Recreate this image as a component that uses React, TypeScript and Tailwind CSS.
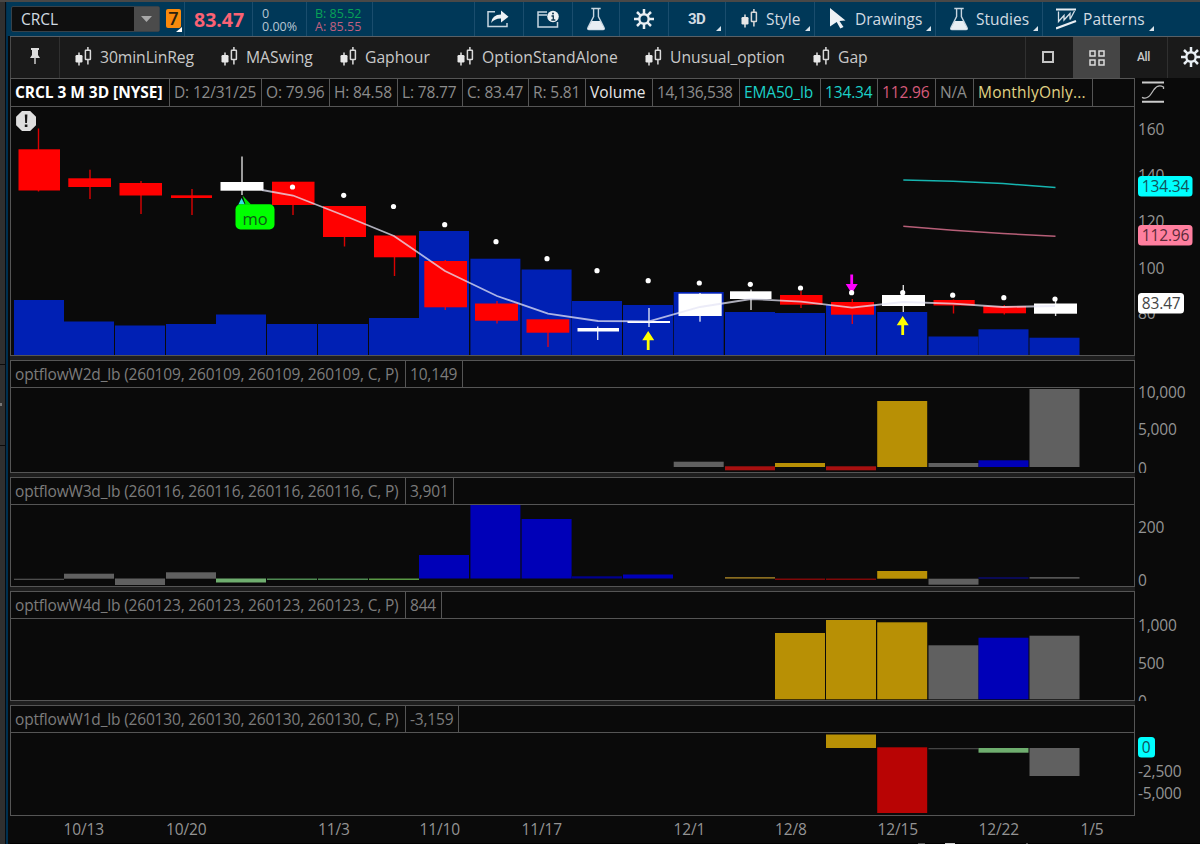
import type { ReactNode } from "react";

const GOLD = "#b89005";
const GRAY = "#606060";
const BLUE = "#0000b8";
const RED = "#b80404";
const GREEN = "#6fae6f";

const SLOTS = [14, 64, 115, 166, 216, 267, 318, 369, 419, 470.4, 521.6, 572, 623, 673.7, 725, 775, 826, 877.2, 928.5, 978.5, 1029.5];
const VOLUME_TOPS = [300, 321.5, 325.5, 324, 314.5, 324, 324, 318, 231, 258.7, 269.5, 301, 305, 292, 312, 313, 305, 312, 336.5, 329.3, 337.7];

// center, left, right, high, body top, body bottom, low, rising
type Candle = [number, number, number, number, number, number, number, boolean];
const CANDLES: Candle[] = [
  [38.5, 18.5, 60, 128.5, 149.3, 190.5, 191.5, false],
  [90, 68.3, 111, 169.7, 178.3, 187, 199, false],
  [141, 119.5, 162, 181, 183, 195.5, 214, false],
  [192, 171, 212, 189, 195.3, 198, 215, false],
  [242, 220.5, 263.5, 156.5, 182, 190.7, 195, true],
  [293, 272, 314.5, 181.7, 181.7, 205, 215, false],
  [344.5, 323, 366, 206, 206, 237, 246.5, false],
  [394.5, 374, 416, 235.5, 235.5, 257.3, 276, false],
  [445.3, 424.3, 467, 260, 261, 307.3, 310, false],
  [497, 475, 518, 301, 303.5, 320.7, 323.5, false],
  [548, 526.5, 569.3, 319, 319.3, 332.7, 347, false],
  [597.7, 577.5, 619, 326.5, 328, 331.5, 340, true],
  [649, 627.5, 670, 308, 321, 323, 327, true],
  [700, 678.5, 721.7, 293, 293.7, 316, 321.7, true],
  [751, 730, 771.5, 289.5, 291.3, 299, 310, true],
  [801, 780, 822.5, 291, 295, 304.7, 308, false],
  [852.3, 831, 874, 299, 302, 314.7, 324, false],
  [903.3, 882, 925, 285, 295, 306, 312, true],
  [953.5, 933.5, 974.7, 299.5, 300, 305.5, 313.5, false],
  [1004.3, 983.3, 1026, 305, 306, 313.3, 314.5, false],
  [1055.6, 1034, 1077, 299, 303.5, 313.7, 316, true],
];
const DOTS = [[292.5, 187], [343.7, 195.3], [393.5, 206.5], [444.7, 224.7], [496, 241.7], [547, 258.7], [597, 270.7], [648.2, 280.7], [699.3, 283], [750.3, 284.3], [800.5, 288], [851.6, 292.7], [902.7, 292.7], [952.7, 295.2], [1003.8, 297.7], [1055, 299]];

type Bar = [slot: number, top: number, bottom: number, color: string];

function Bars({ data }: { data: Bar[] }) {
  return (
    <>
      {data.map(([s, t, b, c], i) => (
        <rect key={i} x={SLOTS[s]} y={t} width={50} height={b - t} fill={c} />
      ))}
    </>
  );
}

function CandleIcon({ className = "" }: { className?: string }) {
  return (
    <svg width="17" height="20" viewBox="0 0 17 20" className={`shrink-0 ${className}`}>
      <path d="M4 5.500v13" stroke="#e0e0e0" strokeWidth="1.500" />
      <rect x="0.500" y="8" width="7" height="7.500" rx="1.200" fill="#e8e8e8" />
      <path d="M12.900 0v3.500M12.900 12.500v5" stroke="#d0d0d0" strokeWidth="1.600" />
      <rect x="10.400" y="3.200" width="5" height="9.300" rx="0.500" fill="none" stroke="#d8d8d8" strokeWidth="1.500" />
    </svg>
  );
}

function Flask() {
  return (
    <svg width="20" height="24" viewBox="0 0 20 24" className="shrink-0">
      <path d="M5.300 1.500h9.400M7.600 2v7.500L2 20.500q-1 2 1 2h14q2 0 1-2L12.400 9.500V2" fill="none" stroke="#c6d5e0" strokeWidth="1.400" />
      <path d="M5.800 14h8.400l3.800 7q.6 1.500-1 1.500H3q-1.600 0-1-1.500z" fill="#e8eef3" />
    </svg>
  );
}

function Gear() {
  return (
    <svg width="20" height="20" viewBox="0 0 20 20" className="shrink-0">
      <circle cx="10" cy="10" r="4.700" fill="none" stroke="#e8eef3" strokeWidth="2.400" />
      <path d="M10 0v5M10 15v5M0 10h5M15 10h5M3 3l3.400 3.400M13.600 13.600L17 17M17 3l-3.400 3.400M6.400 13.600L3 17" stroke="#e8eef3" strokeWidth="2.500" />
    </svg>
  );
}

function Corner() {
  return (
    <svg width="5" height="5" viewBox="0 0 5 5" className="absolute right-[4px] bottom-[5px]">
      <path d="M5 0v5H0z" fill="#d8e2ea" />
    </svg>
  );
}

function TopCell({ className, children }: { className: string; children?: ReactNode }) {
  return <div className={`relative flex h-full shrink-0 items-center border-l border-[#1a4d6d] ${className}`}>{children}</div>;
}

function TopBar() {
  return (
    <div className="flex h-[34px] shrink-0 items-center bg-[#003858] text-[15.5px] text-[#d2dbe2]">
      <div className="ml-[4px] flex h-[26px] w-[149px] shrink-0 items-center rounded-[2px] border border-[#37424a] bg-[#0f0f0f] pl-[9px] text-[15.5px]">
        <span className="flex-1 pt-[2px]">CRCL</span>
        <div className="flex h-[24px] w-[25px] items-center justify-center bg-[#4b4b4b]">
          <svg width="11" height="6" viewBox="0 0 11 6"><path d="M0 0h11L5.500 6z" fill="#a8a8a8" /></svg>
        </div>
      </div>
      <div className="relative ml-[6px] flex h-full w-[18px] shrink-0 items-center">
        <div className="mb-[2px] flex h-[19px] w-[15px] items-center justify-center rounded-[2px] bg-[#f98a0c] text-[18px] font-semibold text-[#2b2110]">7</div>
        <svg width="6" height="5" viewBox="0 0 6 5" className="absolute right-[2px] bottom-[4px]"><path d="M6 0v5H0z" fill="#fff" /></svg>
      </div>
      <TopCell className="w-[68px] pt-[2px] pl-[9px] text-[19.5px] font-bold text-[#fb6274]">83.47</TopCell>
      <TopCell className="w-[54px] pt-[2px] pl-[9px] text-[12.5px] leading-[13px] text-[#b7c6d2]"><div>0<br />0.00%</div></TopCell>
      <TopCell className="w-[66px] pt-[2px] pl-[8px] text-[12.5px] leading-[13px]">
        <div><div className="text-[#08a257]">B: 85.52</div><div className="text-[#c0607f]">A: 85.55</div></div>
      </TopCell>
      <TopCell className="w-[102px]" />
      <TopCell className="w-[49px] justify-center">
        <svg width="22" height="18" viewBox="0 0 22 18" className="mr-[2px]">
          <path d="M8 1.800H1V16.500h19V13" fill="none" stroke="#c6d5e0" strokeWidth="1.500" />
          <path d="M4 13Q5 4.500 14 4.500V.5L21.500 6.800 14 12.500V8.500Q8 8.200 4 13z" fill="#eef2f5" />
        </svg>
      </TopCell>
      <TopCell className="w-[49px] justify-center">
        <svg width="23" height="19" viewBox="0 0 23 19">
          <path d="M10 2H1v15h19.500v-5M1 5h9" fill="none" stroke="#c6d5e0" strokeWidth="1.500" />
          <circle cx="16" cy="6.500" r="5.800" fill="#eef2f5" />
          <path d="M14.500 6h1.800v4M14.300 10h4" stroke="#12384f" strokeWidth="1.300" fill="none" />
          <circle cx="16" cy="3.500" r="1" fill="#12384f" />
        </svg>
      </TopCell>
      <TopCell className="w-[47px] justify-center"><Flask /></TopCell>
      <TopCell className="w-[49px] justify-center"><Gear /></TopCell>
      <TopCell className="w-[57px] pl-[19px] font-['Roboto',sans-serif] text-[15px] font-bold tracking-[-0.5px]">3D<Corner /></TopCell>
      <TopCell className="w-[89px] pl-[15px]"><CandleIcon /><span className="ml-[8px] pt-[2px]">Style</span><Corner /></TopCell>
      <TopCell className="w-[121px] pl-[15px]">
        <svg width="16" height="21" viewBox="0 0 16 21" className="mb-[2px]"><path d="M0 0L15.500 12.500 9.500 13l4 6-3.200 1.500-3.600-6.500L0 18.500z" fill="#eef2f5" /></svg>
        <span className="ml-[9px] pt-[2px]">Drawings</span><Corner />
      </TopCell>
      <TopCell className="w-[107px] pl-[13px]"><Flask /><span className="ml-[7px] pt-[2px]">Studies</span><Corner /></TopCell>
      <TopCell className="w-[116px] pl-[13px]">
        <svg width="21" height="22" viewBox="0 0 21 22">
          <path d="M0 1.500h20M0 20.500L20 13" stroke="#e8eef3" strokeWidth="2.200" />
          <path d="M2.500 3.500v10L8 7.500V12l6-6.500v6L18.500 3" fill="none" stroke="#d6e0e8" strokeWidth="1.300" />
        </svg>
        <span className="ml-[6px] pt-[2px] tracking-[0.1px]">Patterns</span><Corner />
      </TopCell>
    </div>
  );
}

function Preset({ className, children }: { className: string; children: ReactNode }) {
  return <div className={`flex shrink-0 items-center gap-[8px] ${className}`}><CandleIcon /><span className="pt-[2px]">{children}</span></div>;
}

function PresetBar() {
  return (
    <div className="ml-[2px] flex h-[41px] shrink-0 items-center overflow-hidden border-l border-[#4a4a4a] bg-[#1a1a1a] pb-[1px] text-[15.7px] text-[#c9c9c9]">
      <div className="flex h-[41px] w-[49px] shrink-0 items-center justify-center border-r border-[#303030]">
        <svg width="10" height="18" viewBox="0 0 10 18" className="-mt-[2px]"><path d="M1 1h8v2H8v5l2 3H0l2-3V3H1z" fill="#ddd" /><path d="M5 10v7" stroke="#ccc" strokeWidth="1.500" /></svg>
      </div>
      <Preset className="w-[146px] pl-[15px] tracking-[-0.08px]">30minLinReg</Preset>
      <Preset className="w-[119px] pl-[15px]">MASwing</Preset>
      <Preset className="w-[117px] pl-[15px]">Gaphour</Preset>
      <Preset className="w-[188px] pl-[15px] tracking-[0.1px]">OptionStandAlone</Preset>
      <Preset className="w-[168px] pl-[15px]">Unusual_option</Preset>
      <Preset className="w-[227px] pl-[15px]">Gap</Preset>
      <div className="flex h-[41px] w-[48px] shrink-0 items-center justify-center border-l border-[#303030] pr-[3px] pb-[1px]"><div className="h-[12px] w-[12px] border-2 border-[#c4c4c4]" /></div>
      <div className="-mt-[1px] -mb-[2px] flex h-[41px] w-[47px] shrink-0 items-center justify-center bg-[#454545]">
        <svg width="16" height="16" viewBox="0 0 16 16" fill="none" stroke="#dcdcdc" strokeWidth="1.500">
          <path d="M1 1h5v5H1zM10 1h5v5h-5zM1 10h5v5H1zM10 10h5v5h-5z" />
        </svg>
      </div>
      <div className="flex h-[41px] w-[48px] shrink-0 items-center justify-center border-r border-[#303030] font-['Roboto',sans-serif] text-[12px] font-medium tracking-[-0.3px]">All</div>
      <div className="ml-[13px] shrink-0"><Gear /></div>
    </div>
  );
}

function Cell({ className, children }: { className: string; children?: ReactNode }) {
  return <div className={`flex h-full shrink-0 items-center overflow-hidden border-r border-[#555] pl-[4px] whitespace-nowrap ${className}`}>{children}</div>;
}

function Panel({ header, plotClass, viewBox, axisBox, axis, children, rowClass, headClass }: {
  header: ReactNode; plotClass: string; viewBox: string; axisBox: string; axis: ReactNode; children: ReactNode; rowClass: string; headClass: string;
}) {
  return (
    <div className={`flex shrink-0 ${rowClass}`}>
      <div className="flex w-[1125px] shrink-0 flex-col border border-[#555]">
        <div className={`flex shrink-0 border-b border-[#555] text-[#8c8c8c] ${headClass}`}>{header}</div>
        <svg viewBox={viewBox} className={`block w-[1123px] shrink-0 ${plotClass}`}>{children}</svg>
      </div>
      <svg viewBox={axisBox} className="h-full w-[65px] shrink-0 overflow-hidden" fontSize="15.500" letterSpacing="-0.150" fill="#949494">{axis}</svg>
    </div>
  );
}

function StudyHeader({ name, value, valueClass }: { name: string; value: string; valueClass: string }) {
  return (
    <>
      <Cell className="w-[395px] pt-[1px] text-[#7c7c7c]">{name}</Cell>
      <Cell className={`pt-[1px] text-[#7c7c7c] ${valueClass}`}>{value}</Cell>
    </>
  );
}

function AxisText({ y, children }: { y: number; children: string }) {
  return <text x="1138" y={Math.floor(y) + 6}>{children}</text>;
}

function Badge({ y, w, fill, color, children }: { y: number; w: number; fill: string; color: string; children: string }) {
  return (
    <g>
      <rect x="1138" y={y} width={w} height="20.500" rx="3.500" fill={fill} />
      <text x="1141.800" y={y + 16} fill={color}>{children}</text>
    </g>
  );
}

function Gap() {
  return <div className="h-[4px] w-[1125px] shrink-0 bg-[#1e1e1e]" />;
}

export default function App() {
  return (
    <div className="flex h-[844px] w-[1200px] flex-col overflow-hidden bg-[#0a0a0a] font-['Open_Sans','Noto_Sans',sans-serif]">
      <div className="h-[2px] shrink-0 bg-[#494847]" />
      <div className="flex min-h-0 flex-1">
        <div className="flex w-[5px] shrink-0 flex-col bg-[#303030]">
          <div className="mt-[362px] h-[82px] border-y border-[#0c0c0c] pt-[38px]"><div className="h-[3px] w-[2px] bg-[#777]" /></div>
        </div>
        <div className="w-[1px] shrink-0 bg-[#080c10]" />
        <div className="w-[2px] shrink-0 bg-[#003050]" />
        <div className="flex w-[1192px] shrink-0 flex-col">
          <div className="-ml-[1px] flex flex-col"><TopBar /></div>
          <div className="ml-[2px] h-[1px] shrink-0 bg-[#596066]" />
          <PresetBar />
          <div className="ml-[2px] flex flex-col">
            <Panel
              rowClass="h-[278px]" headClass="h-[28px] text-[15.5px] tracking-[-0.15px]" plotClass="h-[248px]" viewBox="11 107 1123 248" axisBox="1135 78 65 278"
              header={
                <>
                  <Cell className="w-[159px] pt-[1px] font-bold tracking-[-0.05px] text-white">CRCL 3 M 3D [NYSE]</Cell>
                  <Cell className="w-[92px] pt-[1px]">D: 12/31/25</Cell>
                  <Cell className="w-[68px] pt-[1px]">O: 79.96</Cell>
                  <Cell className="w-[68px] pt-[1px]">H: 84.58</Cell>
                  <Cell className="w-[65px] pt-[1px]">L: 78.77</Cell>
                  <Cell className="w-[66px] pt-[1px]">C: 83.47</Cell>
                  <Cell className="w-[57px] pt-[1px]">R: 5.81</Cell>
                  <Cell className="w-[67px] pt-[1px] tracking-[0.1px] text-[#e6e6e6]">Volume</Cell>
                  <Cell className="w-[87px] pt-[1px] tracking-[-0.35px]">14,136,538</Cell>
                  <Cell className="w-[81px] pt-[1px] text-[#1cd1c8]">EMA50_lb</Cell>
                  <Cell className="w-[57px] pt-[1px] text-[#1cd1c8]">134.34</Cell>
                  <Cell className="w-[58px] pt-[1px] text-[#d65b7b]">112.96</Cell>
                  <Cell className="w-[38px] pt-[1px]">N/A</Cell>
                  <Cell className="w-[119px] pt-[1px] tracking-[0.2px] text-[#e0d385]">MonthlyOnly...</Cell>
                </>
              }
              axis={
                <>
                  <path d="M1142 82.500h22M1142 101.700h22" stroke="#ccc" strokeWidth="2" />
                  <path d="M1142 97.300q5 2.500 9-3.300l3-4.500q4-5.500 9.500-2.500v2" fill="none" stroke="#bbb" strokeWidth="1.300" />
                  <AxisText y={129}>160</AxisText>
                  <AxisText y={175}>140</AxisText>
                  <AxisText y={221}>120</AxisText>
                  <AxisText y={268}>100</AxisText>
                  <AxisText y={313}>80</AxisText>
                  <Badge y={176} w={54.5} fill="#00ffff" color="#12525a">134.34</Badge>
                  <Badge y={225} w={54.5} fill="#ff7f9f" color="#5a2a38">112.96</Badge>
                  <Badge y={293} w={46} fill="#ffffff" color="#444">83.47</Badge>
                </>
              }
            >
              {SLOTS.map((x, i) => <rect key={i} x={x} y={VOLUME_TOPS[i]} width={50} height={355 - VOLUME_TOPS[i]} fill="#0020b4" />)}
              {CANDLES.map(([cx, l, r, hi, t, b, lo, up], i) => (
                <g key={i} fill={up ? "#fff" : "#f00"}>
                  <rect x={cx - 0.7} y={hi} width="1.400" height={lo - hi} fillOpacity={0.85} />
                  <rect x={l} y={t} width={r - l} height={b - t} />
                </g>
              ))}
              <polyline points="262,190 293,195.500 344,215.500 394,236 445,271 497,296 548,313.700 598,321 649,321.300 700,307 751,299 801,301.700 852,307.700 903,302 953,303.700 1003,307 1055,306" fill="none" stroke="#e6e6f6" strokeOpacity="0.750" strokeWidth="1.800" />
              <polyline points="903.300,180 953,181.300 1003,183.500 1055.500,187.500" fill="none" stroke="#16b5b0" strokeWidth="1.500" />
              <polyline points="903.300,226.300 953,230.300 1003,233.600 1055.500,236.200" fill="none" stroke="#b75f78" strokeWidth="1.500" />
              <path d="M648.200 331l6 9.200h-4.600V350h-2.800v-9.800h-4.600zM902.700 316l6 9.200h-4.600V335h-2.800v-9.800h-4.600z" fill="#ffff00" />
              <path d="M851.700 293.500l-6-9.500h4.600V274.500h2.800V284h4.600z" fill="#ff00ff" />
              {DOTS.map(([x, y], i) => <circle key={i} cx={x} cy={y} r="2.600" fill="#fff" />)}
              <path d="M241.600 198l3.200 6.500h-6.400z" fill="#35e0e0" />
              <path d="M242.500 195.500l8.500 9h-5.500z" fill="#00e000" />
              <rect x="235.500" y="204.200" width="39" height="25.300" rx="5" fill="#00ff00" />
              <text x="242.500" y="224.500" fontSize="16.500" fill="#0d5a16">mo</text>
              <path d="M22 111h8.200l5.800 5.800v8.400l-5.800 5.800H22l-5.900-5.800v-8.400z" fill="#dedede" />
              <path d="M24.800 114.500h2.600l-.4 8.500h-1.800zM24.800 124.500h2.600v2.500h-2.600z" fill="#151515" />
            </Panel>
            <Gap />
            <Panel rowClass="h-[113px]" headClass="h-[27px] text-[15.5px] tracking-[-0.18px]" plotClass="h-[84px]" viewBox="11 388 1123 84" axisBox="1135 360 65 113"
              header={<StudyHeader name="optflowW2d_lb (260109, 260109, 260109, 260109, C, P)" value="10,149" valueClass="w-[57px]" />}
              axis={<><AxisText y={392}>10,000</AxisText><AxisText y={429}>5,000</AxisText><AxisText y={468}>0</AxisText></>}>
              <Bars data={[[13, 461.7, 467, GRAY], [14, 466.3, 470.3, "#a81010"], [15, 463, 467, GOLD], [16, 466.3, 470.3, "#a81010"], [17, 401, 467, GOLD], [18, 463, 467, GRAY], [19, 460.3, 467, BLUE], [20, 389, 467, GRAY]]} />
            </Panel>
            <Gap />
            <Panel rowClass="h-[110px]" headClass="h-[27px] text-[15.5px] tracking-[-0.18px]" plotClass="h-[81px]" viewBox="11 505 1123 81" axisBox="1135 477 65 110"
              header={<StudyHeader name="optflowW3d_lb (260116, 260116, 260116, 260116, C, P)" value="3,901" valueClass="w-[48px]" />}
              axis={<><AxisText y={527}>200</AxisText><AxisText y={580}>0</AxisText></>}>
              <Bars data={[[0, 578.7, 579.9, "#555"], [1, 573.7, 578.7, GRAY], [2, 578.5, 585, GRAY], [3, 572.3, 578.7, GRAY], [4, 578.5, 582.5, GREEN], [5, 578.5, 580, "#4f8a52"], [6, 578.5, 580, "#4f8a52"], [7, 578.5, 580, "#5a9a45"], [8, 555, 578.5, BLUE], [9, 505, 578.5, BLUE], [10, 519, 578.5, BLUE], [11, 576.3, 578.5, "#000090"], [12, 574.5, 578.5, BLUE], [14, 577, 578.7, "#8a6d20"], [15, 578.5, 580, "#800808"], [16, 578.5, 580, "#800808"], [17, 571, 578.7, GOLD], [18, 578.7, 584.7, GRAY], [19, 577, 579, "#0a0a55"], [20, 577, 578.7, "#555"]]} />
            </Panel>
            <Gap />
            <Panel rowClass="h-[110px]" headClass="h-[27px] text-[15.5px] tracking-[-0.18px]" plotClass="h-[81px]" viewBox="11 619 1123 81" axisBox="1135 591 65 110"
              header={<StudyHeader name="optflowW4d_lb (260123, 260123, 260123, 260123, C, P)" value="844" valueClass="w-[36px]" />}
              axis={<><AxisText y={625}>1,000</AxisText><AxisText y={663}>500</AxisText><AxisText y={701}>0</AxisText></>}>
              <Bars data={[[15, 633, 699.3, GOLD], [16, 620, 699.3, GOLD], [17, 622.3, 699.3, GOLD], [18, 645.3, 699.3, GRAY], [19, 637.7, 699.3, BLUE], [20, 635.7, 699.3, GRAY]]} />
            </Panel>
            <Gap />
            <Panel rowClass="h-[111px]" headClass="h-[27px] text-[15.5px] tracking-[-0.18px]" plotClass="h-[82px]" viewBox="11 733 1123 82" axisBox="1135 705 65 111"
              header={<StudyHeader name="optflowW1d_lb (260130, 260130, 260130, 260130, C, P)" value="-3,159" valueClass="w-[53px]" />}
              axis={<><Badge y={737} w={17} fill="#00ffff" color="#12525a">0</Badge><AxisText y={771}>-2,500</AxisText><AxisText y={793}>-5,000</AxisText></>}>
              <Bars data={[[16, 734.5, 748, GOLD], [17, 747.3, 813, RED], [18, 748, 749.3, "#444"], [19, 748, 752.7, GREEN], [20, 748, 776, GRAY]]} />
            </Panel>
            <svg viewBox="10 816 1190 28" className="block h-[28px] w-[1190px] shrink-0" fontSize="15.500" letterSpacing="-0.150" fill="#949494">
              {([[63.5, "10/13"], [166, "10/20"], [318, "11/3"], [419.5, "11/10"], [521.5, "11/17"], [673.5, "12/1"], [775, "12/8"], [877.5, "12/15"], [978.5, "12/22"], [1080.5, "1/5"]] as [number, string][]).map(([x, t]) => <text key={t} x={x} y="835">{t}</text>)}
              <rect x="10" y="843" width="1190" height="1" fill="#000" />
              <path d="M918 843.500h7M1026 843.500h2" stroke="#555" />
              <path d="M945 843.500h10" stroke="#ccc" />
            </svg>
          </div>
        </div>
      </div>
    </div>
  );
}
